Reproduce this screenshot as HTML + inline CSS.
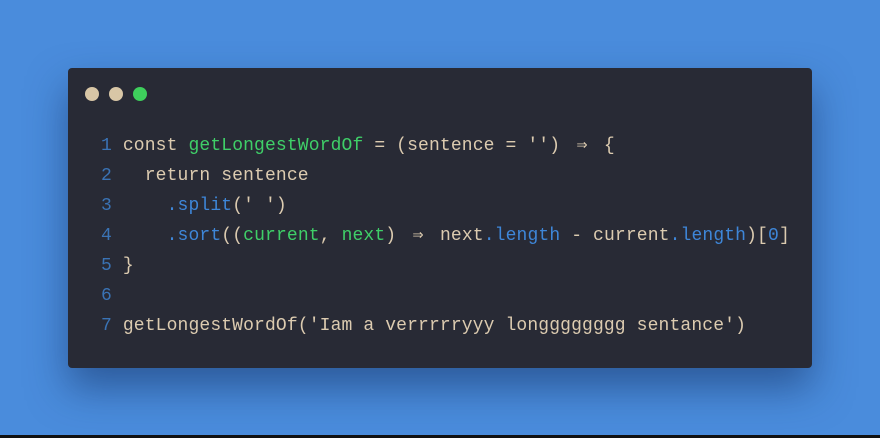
<!DOCTYPE html>
<html><head><meta charset="utf-8"><style>
html,body{margin:0;padding:0}
body{width:880px;height:438px;background:#4a8cdc;position:relative;overflow:hidden}
.bar{position:absolute;left:0;bottom:0;width:880px;height:3px;background:#111}
.win{position:absolute;left:68px;top:68px;width:744px;height:300px;background:#282a35;border-radius:4px;box-shadow:0 20px 40px rgba(20,50,100,0.55)}
.dot{position:absolute;top:19px;width:14px;height:14px;border-radius:50%}
pre{position:absolute;left:33px;top:63px;margin:0;font-family:"Liberation Mono",monospace;font-size:18px;line-height:30px;letter-spacing:0.13px;color:#dccbb0;white-space:pre}
.n{color:#3a73b5}.g{color:#3fcf68}.b{color:#3e86d8}
.a{display:inline-block;width:21.9px;text-align:center}
</style></head><body>
<div class="win">
<div class="dot" style="left:17px;background:#d8c6a6"></div>
<div class="dot" style="left:41px;background:#d8c6a6"></div>
<div class="dot" style="left:65px;background:#3ecf5c"></div>
<pre><span class="n">1</span> const <span class="g">getLongestWordOf</span> = (sentence = '') <span class="a">⇒</span> {
<span class="n">2</span>   return sentence
<span class="n">3</span>     <span class="b">.split</span>(' ')
<span class="n">4</span>     <span class="b">.sort</span>((<span class="g">current</span>, <span class="g">next</span>) <span class="a">⇒</span> next<span class="b">.length</span> - current<span class="b">.length</span>)[<span class="b">0</span>]
<span class="n">5</span> }
<span class="n">6</span>
<span class="n">7</span> getLongestWordOf('Iam a verrrrryyy lon<span>gggg</span><span>gggg</span> sentance')</pre>
</div>
<div class="bar"></div>
</body></html>
